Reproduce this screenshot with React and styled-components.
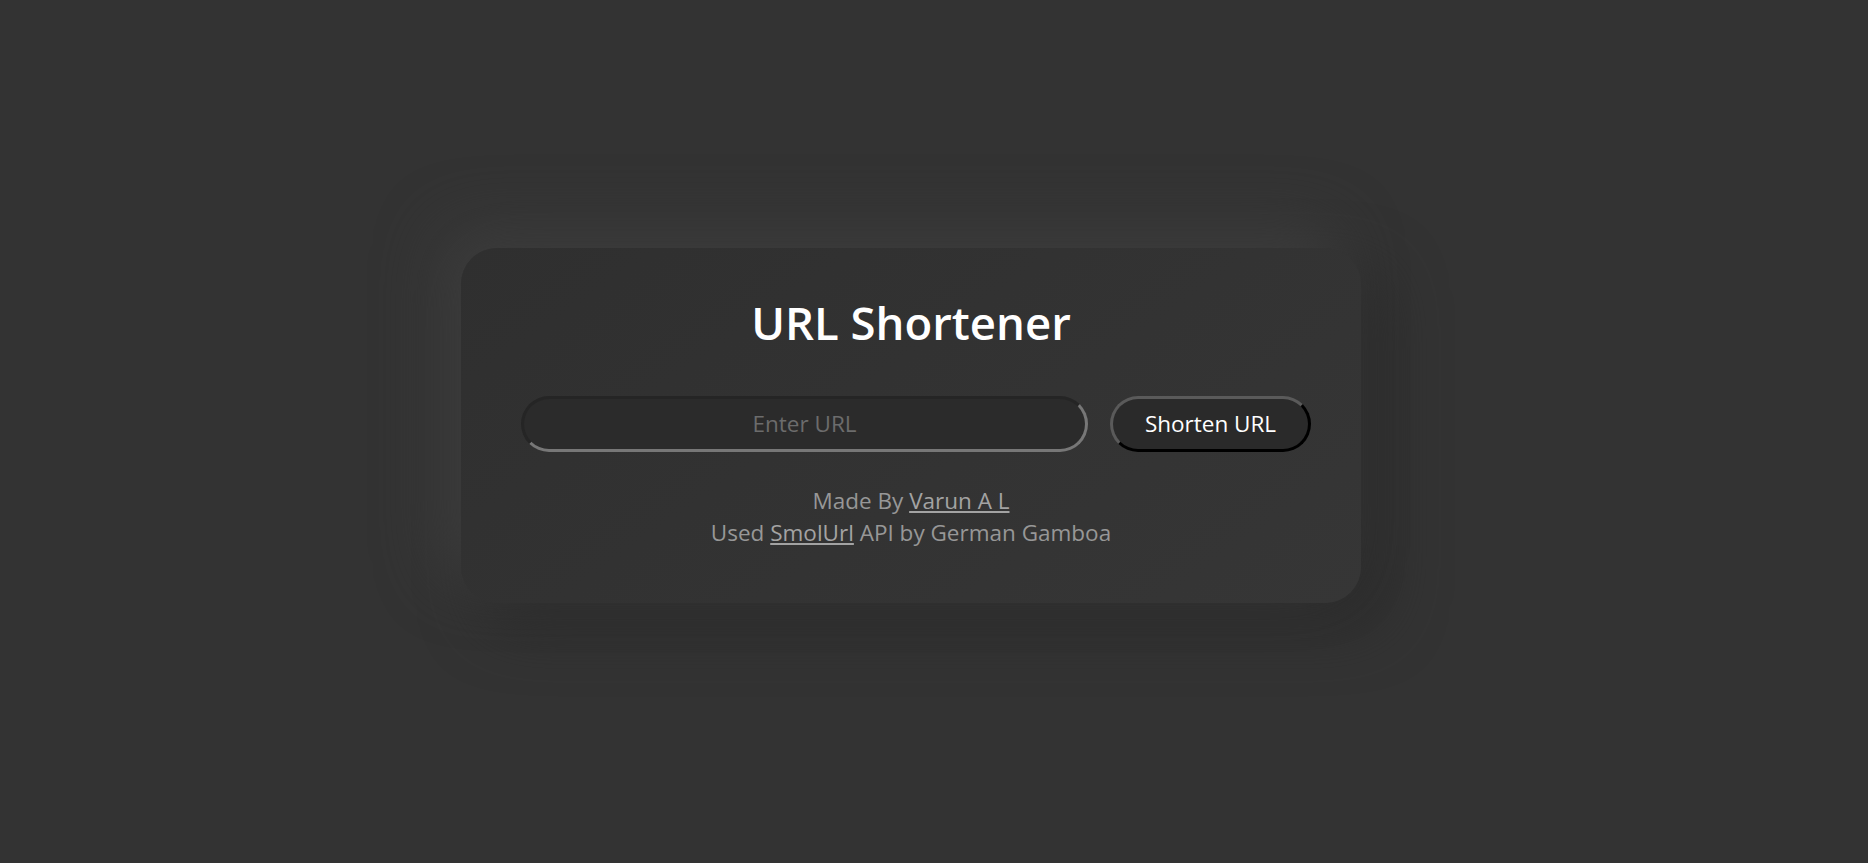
import React, { useState } from 'react';
import styled, { createGlobalStyle } from 'styled-components';

const GlobalStyle = createGlobalStyle`
  html, body {
    margin: 0;
    padding: 0;
    background: #333333;
    font-family: "Open Sans", "Noto Sans", sans-serif;
  }
  * { box-sizing: border-box; }
`;

const Page = styled.main`
  min-height: 100vh;
  display: flex;
  align-items: center;
  justify-content: center;
  padding: 0 46px 13px 0;
  background: #333333;
`;

const Card = styled.section`
  width: 900px;
  padding: 45px 0 54px;
  border-radius: 36px;
  background: linear-gradient(145deg, #2f2f2f, #363636);
  box-shadow: -22px -22px 60px #3c3c3c, 22px 22px 60px #2b2b2b;
  display: flex;
  flex-direction: column;
  align-items: center;
`;

const Title = styled.h1`
  margin: 0;
  font-size: 45.5px;
  line-height: 58px;
  font-weight: 600;
  color: #ffffff;
`;

const Form = styled.form`
  margin-top: 45px;
  padding-left: 10px;
  display: flex;
  gap: 22px;
`;

const UrlInput = styled.input`
  width: 567px;
  height: 56px;
  border-radius: 28px;
  border: 3px solid;
  border-color: #252525 #777777 #777777 #252525;
  background: #2b2b2b;
  color: #dddddd;
  font-family: inherit;
  font-size: 22.5px;
  text-align: center;
  outline: none;

  &::placeholder {
    color: #6c6c6c;
  }
`;

const ShortenButton = styled.button`
  width: 201px;
  height: 56px;
  border-radius: 28px;
  border: 3px solid;
  border-color: #5a5a5a #000000 #000000 #5a5a5a;
  background: #2a2a2a;
  color: #ffffff;
  font-family: inherit;
  font-size: 22.5px;
  cursor: pointer;
`;

const Credits = styled.footer`
  margin-top: 33px;
  text-align: center;
  color: #979797;
  font-size: 22.5px;
  line-height: 32px;
`;

const Line = styled.div``;

const Link = styled.a`
  color: #a3a3a3;
  text-decoration: underline;
`;

export default function App() {
  const [url, setUrl] = useState('');

  return (
    <>
      <GlobalStyle />
      <Page>
        <Card>
          <Title>URL Shortener</Title>
          <Form onSubmit={(e) => e.preventDefault()}>
            <UrlInput
              type="text"
              value={url}
              onChange={(e) => setUrl(e.target.value)}
              placeholder="Enter URL"
            />
            <ShortenButton type="submit">Shorten URL</ShortenButton>
          </Form>
          <Credits>
            <Line>
              Made By <Link href="#">Varun A L</Link>
            </Line>
            <Line>
              Used <Link href="#">SmolUrl</Link> API by German Gamboa
            </Line>
          </Credits>
        </Card>
      </Page>
    </>
  );
}
